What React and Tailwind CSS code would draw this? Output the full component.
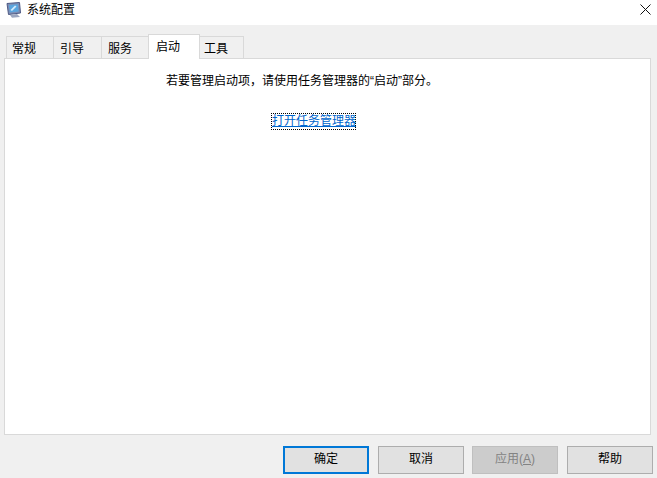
import React from 'react';

const font = { fontFamily: '"Liberation Sans", "Noto Sans CJK SC", sans-serif' };

function AppIcon() {
  return (
    <svg width="16" height="16" viewBox="0 0 16 16" className="shrink-0">
      <path d="M1 1.5 L13.5 0.5 L14.5 11 L2.5 12.5 Z" fill="#7f8db3" stroke="#4d5a85" strokeWidth="1" />
      <path d="M3 3 L12 2.3 L12.7 9.5 L3.8 10.5 Z" fill="#5aa5de" />
      <path d="M4.5 8 L9 3.5 L10.5 4.5 L6 9 Z" fill="#d4ebfc" />
      <path d="M4 13 L11 12 L14 15 L6 15.7 Z" fill="#9aa5bf" />
    </svg>
  );
}

function CloseIcon() {
  return (
    <svg width="11" height="11" viewBox="0 0 11 11" fill="none" stroke="#111" strokeWidth="1">
      <path d="M0.5 0.5 L10.5 10.5 M10.5 0.5 L0.5 10.5" />
    </svg>
  );
}

const tabs = [
  { label: '常规', box: 'w-[48px] pl-[5px]' },
  { label: '引导', box: 'w-[49px] pl-[6px]' },
  { label: '服务', box: 'w-[48px] pl-[6px]' },
  { label: '启动', box: 'w-[52px] pl-[7px]', active: true },
  { label: '工具', box: 'w-[45px] pl-[4px]' },
];

function Tab({ label, box, active }) {
  if (active) {
    return (
      <div className={`${box} h-[25px] -mr-px -mb-px relative z-10 bg-white border border-b-0 border-[#d9d9d9] pt-[2px] text-[12px] leading-[20px] text-black`}>
        {label}
      </div>
    );
  }
  return (
    <div className={`${box} h-[22px] -mr-px bg-[#f0f0f0] border border-b-0 border-[#d9d9d9] pt-[2px] text-[12px] leading-[20px] text-black`}>
      {label}
    </div>
  );
}

function Button({ children, primary, disabled }) {
  return (
    <button
      className={`w-[86px] h-[28px] pb-[2px] text-[12px] border ${
        primary
          ? 'border-2 border-[#0078d7] bg-[#e1e1e1] text-black'
          : disabled
            ? 'border-[#bfbfbf] bg-[#cccccc] text-[#838383]'
            : 'border-[#adadad] bg-[#e1e1e1] text-black'
      }`}
    >
      {children}
    </button>
  );
}

export default function App() {
  return (
    <div className="w-[657px] h-[478px] bg-[#f0f0f0] flex flex-col overflow-hidden" style={font}>
      {/* title bar */}
      <div className="h-[25px] bg-white flex items-center pl-[6px] pr-[6px] pb-[6px]">
        <AppIcon />
        <span className="ml-[5px] text-[12px] leading-[18px] text-black">系统配置</span>
        <span className="ml-auto flex">
          <CloseIcon />
        </span>
      </div>

      {/* tabs */}
      <div className="h-[33px] pl-[6px] flex items-end">
        {tabs.map((t) => (
          <Tab key={t.label} {...t} />
        ))}
      </div>

      {/* panel */}
      <div className="ml-[4px] mr-[6px] h-[377px] bg-white border border-[#d9d9d9] flex flex-col items-start">
        <p className="mt-[13px] ml-[161px] text-[12px] leading-[18px] text-black">
          若要管理启动项，请使用任务管理器的“启动”部分。
        </p>
        <a
          href="#"
          className="mt-[23px] ml-[266px] w-[85px] h-[17px] leading-[15px] text-[12px] text-[#0066cc] underline border border-dotted border-black whitespace-nowrap"
        >
          打开任务管理器
        </a>
      </div>

      {/* buttons */}
      <div className="flex justify-end pr-[4px] pt-[11px]">
        <Button primary>确定</Button>
        <span className="w-[9px]" />
        <Button>取消</Button>
        <span className="w-[8px]" />
        <Button disabled>
          应用(<span className="underline">A</span>)
        </Button>
        <span className="w-[9px]" />
        <Button>帮助</Button>
      </div>
    </div>
  );
}
